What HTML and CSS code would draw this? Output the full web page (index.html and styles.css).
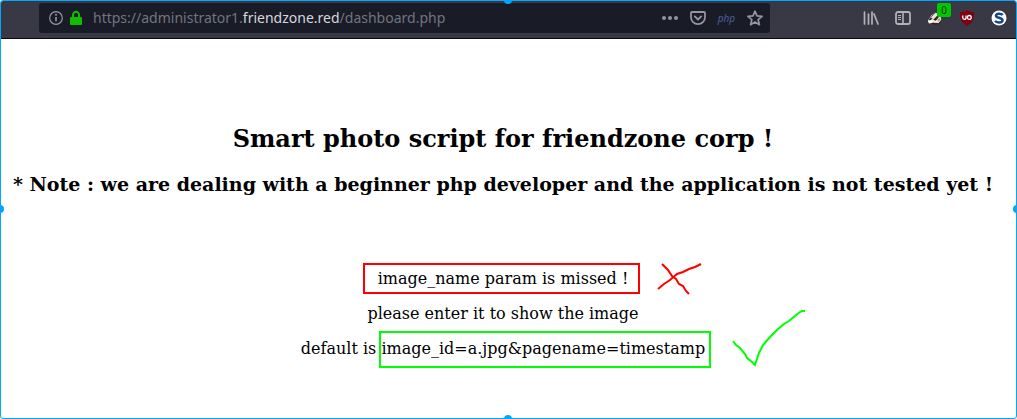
FILE: index.html
```
<!DOCTYPE html>
<html lang="en">
<head>
<meta charset="utf-8">
<title>FriendZone dashboard</title>
<link rel="stylesheet" href="styles.css">
</head>
<body>
<div class="frame">
  <header class="toolbar">
    <div class="urlbar">
      <button class="icon-btn" type="button" aria-label="Site information">
        <svg width="16" height="16" viewBox="0 0 16 16"><circle cx="8" cy="8" r="6.3" fill="none" stroke="#9698a3" stroke-width="1.2"/><path d="M8 7v4.2" stroke="#9698a3" stroke-width="1.6"/><circle cx="8" cy="4.8" r="1" fill="#9698a3"/></svg>
      </button>
      <button class="icon-btn lock" type="button" aria-label="Secure connection">
        <svg width="14" height="16" viewBox="0 0 14 16"><path d="M4 8V5a3 3.3 0 0 1 6 0v3" fill="none" stroke="#12bc00" stroke-width="2"/><rect x="1" y="7" width="12" height="8" rx="1" fill="#12bc00"/></svg>
      </button>
      <div class="address" role="textbox" aria-label="Address" contenteditable="true" spellcheck="false">https://administrator1.<span class="host">friendzone.red</span>/dashboard.php</div>
      <div class="actions">
        <button class="icon-btn" type="button" aria-label="Page actions">
          <svg width="16" height="16" viewBox="0 0 16 16" fill="#9395a0"><circle cx="2" cy="8" r="2"/><circle cx="8" cy="8" r="2"/><circle cx="14" cy="8" r="2"/></svg>
        </button>
        <button class="icon-btn" type="button" aria-label="Save to Pocket">
          <svg width="16" height="16" viewBox="0 0 16 16" fill="none" stroke="#9395a0" stroke-width="1.8" stroke-linecap="round" stroke-linejoin="round"><path d="M2 2h12q1 0 1 1v4.2a7 7 0 0 1-14 0V3q0-1 1-1z"/><path d="M4.8 6.4L8 9.5l3.200-3.100"/></svg>
        </button>
        <button class="icon-btn php" type="button">php</button>
        <button class="icon-btn" type="button" aria-label="Bookmark this page">
          <svg width="16" height="16" viewBox="0 0 16 16"><path d="M8 1.200l2 4.700 5.100.4-3.900 3.400 1.200 5L8 12l-4.400 2.700 1.200-5L.9 6.300 6 5.900z" fill="none" stroke="#9395a0" stroke-width="1.700" stroke-linejoin="round"/></svg>
        </button>
      </div>
    </div>
    <div class="tools">
      <button class="icon-btn" type="button" aria-label="Library">
        <svg width="16" height="16" viewBox="0 0 16 16" fill="none" stroke="#b1b2b9" stroke-width="1.700" stroke-linecap="round"><path d="M1.500 2v12M5.500 4v10M9 2v12M11 4l4 10"/></svg>
      </button>
      <button class="icon-btn" type="button" aria-label="Sidebars">
        <svg width="16" height="16" viewBox="0 0 16 16" fill="none" stroke="#b1b2b9"><rect x="1" y="2" width="14" height="12" rx="2" stroke-width="1.800"/><path d="M8 2v12" stroke-width="1.600"/><path d="M3 5.500h3M3 7.500h3M3 9.500h3"/></svg>
      </button>
      <button class="icon-btn badger" type="button" aria-label="Privacy Badger">
        <svg width="16" height="16" viewBox="0 0 18 16"><path d="M1 11L5 5l5-3 5 3 1 5-3 4-6 1-5-1z" fill="#e9e3dc"/><path d="M2 10l4-5 3-2-2 4-3 4zM7 10l5-5 2 1-4 5z" fill="#27201d"/><path d="M1 12l4-2 2 3-3 1z" fill="#fff"/><path d="M3 14l5-1 5 1 3-3-2 4-6 1z" fill="#332721"/><path d="M11 11l3-3 1 2-2 2z" fill="#c4865f"/><path d="M5 8l4-4M8 13l4-2" stroke="#f5eee7" stroke-width="1.500"/></svg>
        <span class="count">0</span>
      </button>
      <button class="icon-btn" type="button" aria-label="uBlock Origin">
        <svg width="16" height="16" viewBox="0 0 16 16"><path d="M8 0c2 1.500 4 2 7 2 0 7-.5 10-7 14C1.500 12 1 9 1 2c3 0 5-.5 7-2z" fill="#800010"/><path d="M3.800 5.500v2.300q0 1.500 1.600 1.500T7 7.800V5.500" fill="none" stroke="#fff" stroke-width="1.300"/><circle cx="10.300" cy="7.400" r="1.900" fill="none" stroke="#fff" stroke-width="1.300"/></svg>
      </button>
      <button class="icon-btn" type="button" aria-label="Startpage">
        <svg width="16" height="16" viewBox="0 0 16 16"><circle cx="8" cy="8" r="7.500" fill="#fff"/><path d="M11.700 5C10.500 3.200 5 3 5 5.700c0 2.600 6.500 1.600 6.500 4.500 0 3-6 2.900-7.500.7" fill="none" stroke="#15478e" stroke-width="2.500"/></svg>
      </button>
    </div>
  </header>
  <main class="page">
    <h2 class="title">Smart photo script for friendzone corp !</h2>
    <h3 class="note">* Note : we are dealing with a beginner php developer and the application is not tested yet !</h3>
    <div class="messages">
      <p class="line"><span class="marked wrong">image_name param is missed !<svg class="mark cross" width="46" height="34" viewBox="0 0 46 34" aria-hidden="true"><path d="M5 2l6 6 4 6 4 3 3 5 4 2 3 5 3 3M1 27l6-5 6-4 7-6 6-2 6-3 6-2 6-3"/></svg></span></p>
      <p class="line">please enter it to show the image</p>
      <p class="line">default is <span class="marked right">image_id=a.jpg&amp;pagename=timestamp<svg class="mark tick" width="74" height="60" viewBox="0 0 74 60" aria-hidden="true"><path d="M2 33l3 4 4 3 5 6 2 4 5 4 3 3 4-12 4-8 7-8 8-8 6-5 5-3 6-5 5-4 2-1h3"/></svg></span></p>
    </div>
  </main>
  <i class="handle left"></i><i class="handle right-side"></i><i class="handle top"></i><i class="handle bottom"></i>
</div>
</body>
</html>
```
FILE: styles.css
```
* { box-sizing: border-box; }
body { margin: 0; background: #fff; }

.frame {
  position: relative;
  min-height: 100vh;
  overflow: hidden;
  border: 1px solid #00a8ff;
  border-radius: 3px;
  background: #fff;
}

.toolbar {
  display: flex;
  align-items: flex-start;
  gap: 93px;
  padding: 2px 9px 5px 38px;
  background: #383944;
  border-bottom: 1px solid #08080d;
  font-family: "Noto Sans", sans-serif;
}
.urlbar {
  display: flex;
  flex: 1;
  align-items: center;
  min-width: 0;
  height: 30px;
  padding: 0 7px 0 9px;
  border-radius: 3px;
  background: #191c27;
}
.icon-btn {
  display: flex;
  align-items: center;
  justify-content: center;
  padding: 0;
  border: 0;
  background: none;
  color: inherit;
}
.lock { margin: 0 10px 0 5px; }
.address {
  flex: 1;
  min-width: 0;
  overflow: hidden;
  white-space: nowrap;
  font-size: 14px;
  line-height: 20px;
  color: #717480;
  outline: none;
}
.host { color: #d5d7de; }
.actions { display: flex; align-items: center; gap: 12px; }
.php {
  font: italic 10px/16px "Noto Sans", sans-serif;
  color: #505d9e;
}
.tools {
  display: flex;
  align-items: center;
  gap: 16px;
  height: 30px;
}
.badger { position: relative; }
.count {
  position: absolute;
  left: 10px;
  top: -7px;
  width: 14px;
  height: 14px;
  border-radius: 2px;
  background: #00c800;
  color: #103010;
  font: 10px/14px "Noto Sans", sans-serif;
  text-align: center;
}

.page {
  padding: 86px 11px 0 0;
  font-family: "DejaVu Serif", serif;
  text-align: center;
  color: #000;
}
.title { margin: 0 0 20px; font-size: 24px; line-height: 28px; }
.note { margin: 0 0 74px; font-size: 19px; line-height: 22px; white-space: nowrap; }
.messages { display: flex; flex-direction: column; gap: 16px; }
.line { margin: 0; font-size: 16px; line-height: 19px; }

.marked { position: relative; display: inline-block; }
.marked::after { content: ""; position: absolute; border: 2px solid; }
.wrong::after { inset: -6px -12px -6px -15px; border-color: #f00; }
.right::after { inset: -8px -6px -10px -2px; border-color: #0f0; }
.mark { position: absolute; fill: none; stroke-width: 2; }
.cross { left: 100%; top: -7px; margin-left: 29px; stroke: #f00; }
.tick { left: 100%; top: -31px; margin-left: 26px; stroke: #0f0; }

.handle {
  position: absolute;
  width: 8px;
  height: 8px;
  border-radius: 50%;
  background: #00a8ff;
}
.left { left: -5px; top: 50%; margin-top: -5px; }
.right-side { right: -5px; top: 50%; margin-top: -5px; }
.top { left: 50%; top: -5px; margin-left: -5px; }
.bottom { left: 50%; bottom: -5px; margin-left: -5px; }
```
